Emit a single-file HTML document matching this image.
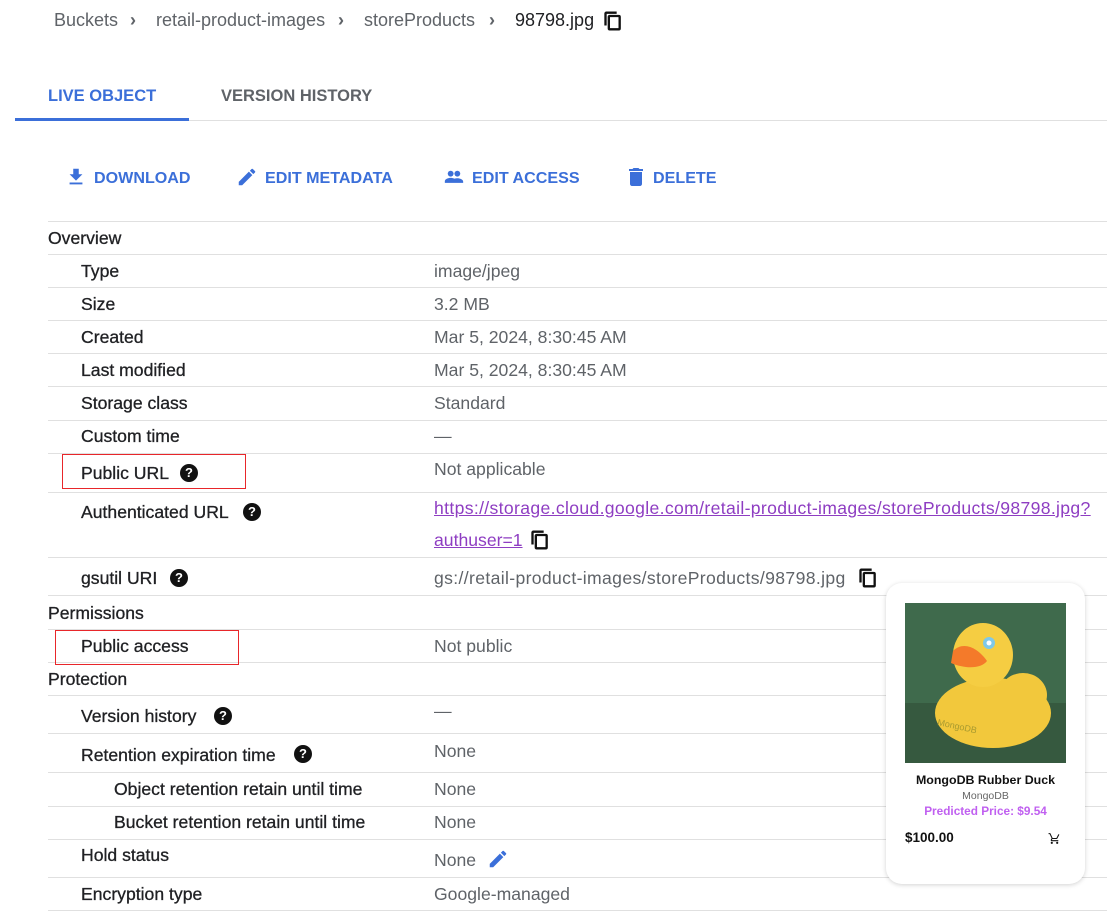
<!DOCTYPE html>
<html><head><meta charset="utf-8"><style>
body{margin:0;width:1107px;height:924px;background:#fff;position:relative;overflow:hidden;font-family:"Liberation Sans",Arial,sans-serif}
.t{position:absolute;line-height:20px;white-space:nowrap;font-size:17.6px;letter-spacing:0}
.l{color:#202124;font-weight:500;-webkit-text-stroke:0.3px #202124}
.v{color:#5f6368}
.h{position:absolute;left:48px;right:0;height:1px;background:#e0e0e0}
.q{position:absolute;width:18px;height:18px;border-radius:50%;background:#111;color:#fff;font-size:13px;font-weight:bold;text-align:center;line-height:18px;letter-spacing:0}
.btn{position:absolute;top:168px;color:#3b6fd9;font-size:16.1px;font-weight:bold;line-height:20px;white-space:nowrap}
.box{position:absolute;border:1.5px solid #e8262a}
.cp{position:absolute}
</style></head><body>
<div class="t v" style="left:54px;top:10px;font-size:18px">Buckets</div>
<div class="t v" style="left:130px;top:10px;font-size:18px;font-weight:bold">›</div>
<div class="t v" style="left:156px;top:10px;font-size:18px">retail-product-images</div>
<div class="t v" style="left:338px;top:10px;font-size:18px;font-weight:bold">›</div>
<div class="t v" style="left:364px;top:10px;font-size:18px">storeProducts</div>
<div class="t v" style="left:489px;top:10px;font-size:18px;font-weight:bold">›</div>
<div class="t" style="left:515px;top:10px;font-size:18px;color:#202124">98798.jpg</div>
<svg class="cp" style="left:603px;top:11px" width="20" height="20" viewBox="0 0 24 24"><path d="M16 1H4c-1.1 0-2 .9-2 2v14h2V3h12V1zm3 4H8c-1.1 0-2 .9-2 2v14c0 1.1.9 2 2 2h11c1.1 0 2-.9 2-2V7c0-1.1-.9-2-2-2zm0 16H8V7h11v14z" fill="#111" stroke="#111" stroke-width="0.8"/></svg>

<div class="t" style="left:48px;top:86px;color:#3b6fd9;font-weight:bold;font-size:16.5px">LIVE OBJECT</div>
<div class="t" style="left:221px;top:86px;color:#5f6368;font-weight:bold;font-size:16.5px">VERSION HISTORY</div>
<div style="position:absolute;left:15px;right:0;top:120px;height:1px;background:#e0e0e0"></div>
<div style="position:absolute;left:15px;width:174px;top:118px;height:3px;background:#3b6fd9"></div>

<svg style="position:absolute;left:65px;top:166px" width="22" height="22" viewBox="0 0 24 24"><path d="M19 9h-4V3H9v6H5l7 7 7-7zM5 18v2h14v-2H5z" fill="#3b6fd9"/></svg>
<div class="btn" style="left:94px">DOWNLOAD</div>
<svg style="position:absolute;left:236px;top:166px" width="22" height="22" viewBox="0 0 24 24"><path d="M3 17.25V21h3.75L17.81 9.94l-3.75-3.75L3 17.25zM20.71 7.04c.39-.39.39-1.02 0-1.41l-2.34-2.34a1 1 0 0 0-1.41 0l-1.83 1.83 3.75 3.75 1.830-1.83z" fill="#3b6fd9"/></svg>
<div class="btn" style="left:265px">EDIT METADATA</div>
<svg style="position:absolute;left:443px;top:167px" width="22" height="20" viewBox="0 0 24 24"><circle cx="8" cy="8" r="3.5" fill="#3b6fd9"/><circle cx="16" cy="8" r="3.5" fill="#3b6fd9"/><path d="M1 19v-2c0-2.5 4-4 7-4s7 1.5 7 4v2zM14 19v-2c0-1.3-.6-2.3-1.5-3 1-.3 2.5-.5 3.5-.5 3 0 7 1.5 7 4v1.5z" fill="#3b6fd9"/></svg>
<div class="btn" style="left:472px">EDIT ACCESS</div>
<svg style="position:absolute;left:624px;top:165px" width="24" height="24" viewBox="0 0 24 24"><path d="M6 19c0 1.1.9 2 2 2h8c1.1 0 2-.9 2-2V7H6v12zM19 4h-3.5l-1-1h-5l-1 1H5v2h14V4z" fill="#3b6fd9"/></svg>
<div class="btn" style="left:653px">DELETE</div>

<div class="h" style="top:221px"></div><div class="h" style="top:254px"></div><div class="h" style="top:287px"></div><div class="h" style="top:320px"></div><div class="h" style="top:353px"></div><div class="h" style="top:386px"></div><div class="h" style="top:420px"></div><div class="h" style="top:453px"></div><div class="h" style="top:492px"></div><div class="h" style="top:557px"></div><div class="h" style="top:595px"></div><div class="h" style="top:629px"></div><div class="h" style="top:662px"></div><div class="h" style="top:695px"></div><div class="h" style="top:733px"></div><div class="h" style="top:772px"></div><div class="h" style="top:806px"></div><div class="h" style="top:839px"></div><div class="h" style="top:877px"></div><div class="h" style="top:910px"></div>

<div class="t l" style="left:48px;top:228px">Overview</div>
<div class="t l" style="left:81px;top:261px">Type</div><div class="t v" style="left:434px;top:261px">image/jpeg</div>
<div class="t l" style="left:81px;top:294px">Size</div><div class="t v" style="left:434px;top:294px">3.2 MB</div>
<div class="t l" style="left:81px;top:327px">Created</div><div class="t v" style="left:434px;top:327px">Mar 5, 2024, 8:30:45 AM</div>
<div class="t l" style="left:81px;top:360px">Last modified</div><div class="t v" style="left:434px;top:360px">Mar 5, 2024, 8:30:45 AM</div>
<div class="t l" style="left:81px;top:393px">Storage class</div><div class="t v" style="left:434px;top:393px">Standard</div>
<div class="t l" style="left:81px;top:426px">Custom time</div><div class="t v" style="left:434px;top:426px">—</div>
<div class="t l" style="left:81px;top:463px">Public URL</div><div class="q" style="left:180px;top:464px">?</div><div class="t v" style="left:434px;top:459px">Not applicable</div>
<div class="box" style="left:62px;top:454px;width:182px;height:33px"></div>
<div class="t l" style="left:81px;top:502px">Authenticated URL</div><div class="q" style="left:243px;top:503px">?</div>
<div class="t" style="left:434px;top:498px;color:#8e3dc2;text-decoration:underline;letter-spacing:0.34px">https://storage.cloud.google.com/retail-product-images/storeProducts/98798.jpg?</div>
<div class="t" style="left:434px;top:530px;color:#8e3dc2;text-decoration:underline">authuser=1</div>
<svg class="cp" style="left:530px;top:530px" width="20" height="20" viewBox="0 0 24 24"><path d="M16 1H4c-1.1 0-2 .9-2 2v14h2V3h12V1zm3 4H8c-1.1 0-2 .9-2 2v14c0 1.1.9 2 2 2h11c1.1 0 2-.9 2-2V7c0-1.1-.9-2-2-2zm0 16H8V7h11v14z" fill="#111" stroke="#111" stroke-width="0.8"/></svg>
<div class="t l" style="left:81px;top:568px">gsutil URI</div><div class="q" style="left:170px;top:569px">?</div>
<div class="t v" style="left:434px;top:568px;letter-spacing:0.35px">gs://retail-product-images/storeProducts/98798.jpg</div>
<svg class="cp" style="left:858px;top:568px" width="20" height="20" viewBox="0 0 24 24"><path d="M16 1H4c-1.1 0-2 .9-2 2v14h2V3h12V1zm3 4H8c-1.1 0-2 .9-2 2v14c0 1.1.9 2 2 2h11c1.1 0 2-.9 2-2V7c0-1.1-.9-2-2-2zm0 16H8V7h11v14z" fill="#111" stroke="#111" stroke-width="0.8"/></svg>
<div class="t l" style="left:48px;top:603px">Permissions</div>
<div class="t l" style="left:81px;top:636px">Public access</div><div class="t v" style="left:434px;top:636px">Not public</div>
<div class="box" style="left:55px;top:630px;width:182px;height:33px"></div>
<div class="t l" style="left:48px;top:669px">Protection</div>
<div class="t l" style="left:81px;top:706px">Version history</div><div class="q" style="left:214px;top:707px">?</div><div class="t v" style="left:434px;top:701px">—</div>
<div class="t l" style="left:81px;top:745px">Retention expiration time</div><div class="q" style="left:294px;top:745px">?</div><div class="t v" style="left:434px;top:741px">None</div>
<div class="t l" style="left:114px;top:779px">Object retention retain until time</div><div class="t v" style="left:434px;top:779px">None</div>
<div class="t l" style="left:114px;top:812px">Bucket retention retain until time</div><div class="t v" style="left:434px;top:812px">None</div>
<div class="t l" style="left:81px;top:845px">Hold status</div><div class="t v" style="left:434px;top:850px">None</div>
<svg style="position:absolute;left:487px;top:848px" width="22" height="22" viewBox="0 0 24 24"><path d="M3 17.25V21h3.75L17.81 9.94l-3.75-3.75L3 17.25zM20.71 7.04c.39-.39.39-1.02 0-1.41l-2.34-2.34a1 1 0 0 0-1.41 0l-1.83 1.83 3.75 3.75 1.83-1.83z" fill="#3b6fd9"/></svg>
<div class="t l" style="left:81px;top:884px">Encryption type</div><div class="t v" style="left:434px;top:884px">Google-managed</div>

<div style="position:absolute;left:886px;top:583px;width:199px;height:301px;background:#fff;border-radius:16px;box-shadow:0 1px 5px rgba(0,0,0,0.18)"></div>
<svg style="position:absolute;left:905px;top:603px" width="161" height="160" viewBox="0 0 161 160">
<rect width="161" height="160" fill="#3f6a4c"/>
<rect y="100" width="161" height="60" fill="#36593f"/>
<ellipse cx="88" cy="110" rx="58" ry="35" fill="#f2c83c"/>
<ellipse cx="118" cy="92" rx="24" ry="22" fill="#f2c83c"/>
<ellipse cx="78" cy="52" rx="30" ry="32" fill="#f5cd42"/>
<circle cx="84" cy="40" r="6" fill="#7fc8e8"/><circle cx="84" cy="40" r="2.5" fill="#fff"/>
<path d="M48 48 C58 38 72 44 82 58 C76 66 60 66 46 60 Z" fill="#f47a2a"/>
<text x="32" y="122" font-family="Liberation Sans" font-size="9" fill="#a89a30" transform="rotate(12 32 122)">MongoDB</text>
</svg>
<div class="t" style="left:886px;width:199px;text-align:center;top:770px;font-size:12.4px;font-weight:bold;color:#111">MongoDB Rubber Duck</div>
<div class="t" style="left:886px;width:199px;text-align:center;top:786px;font-size:10.5px;color:#666">MongoDB</div>
<div class="t" style="left:886px;width:199px;text-align:center;top:801px;font-size:11.8px;font-weight:bold;color:#c060f0">Predicted Price: $9.54</div>
<div class="t" style="left:905px;top:828px;font-size:13.5px;font-weight:bold;color:#111">$100.00</div>
<svg style="position:absolute;left:1048px;top:832px" width="13" height="13" viewBox="0 0 24 24"><path d="M7 18c-1.1 0-2 .9-2 2s.9 2 2 2 2-.9 2-2-.9-2-2-2zM1 2v2h2l3.6 7.59-1.35 2.45C4.52 15.37 5.48 17 7 17h12v-2H7l1.1-2h7.45c.75 0 1.41-.41 1.75-1.03L21 4.96 19.25 4l-3.7 7H8.53L4.27 2H1zm16 16c-1.1 0-2 .9-2 2s.9 2 2 2 2-.9 2-2-.9-2-2-2z" fill="#111"/></svg>
</body></html>
